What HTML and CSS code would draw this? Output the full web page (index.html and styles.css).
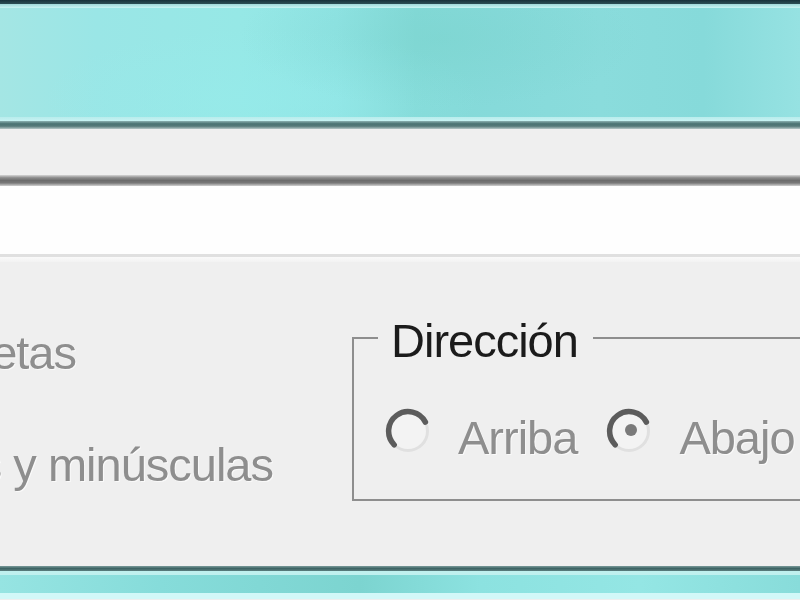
FILE: index.html
```html
<!DOCTYPE html>
<html lang="es">
<head>
<meta charset="utf-8">
<title>Buscar</title>
<link rel="stylesheet" href="styles.css">
</head>
<body>
<div class="window">
  <div class="titlebar">
    <div class="tb-dark"></div>
    <div class="tb-hi"></div>
    <div class="tb-teal"></div>
    <div class="tb-lo"></div>
    <div class="tb-edge"></div>
  </div>
  <div class="band"></div>
  <div class="field">
    <div class="field-edge"></div>
    <div class="field-white"></div>
    <div class="field-line"></div>
    <div class="field-gap"></div>
  </div>
  <div class="body">
    <div class="options">
      <div class="opt opt-words"><span>Solo palabras completas</span></div>
      <div class="opt opt-case"><span>Coincidir mayúsculas y minúsculas</span></div>
    </div>
    <fieldset class="group">
      <legend class="group-title">Dirección</legend>
      <div class="radios">
        <div class="radio">
          <svg class="radio-icon" width="46" height="46" viewBox="0 0 46 46">
            <circle cx="23" cy="23" r="19.5" fill="#f3f3f3" stroke="#e0e0e0" stroke-width="3"/>
            <path d="M9.2 36.8 A19.5 19.5 0 1 1 40.4 14.1" fill="none" stroke="#5c5c5c" stroke-width="5.5" stroke-linecap="round"/>
          </svg>
          <span class="radio-label">Arriba</span>
        </div>
        <div class="radio">
          <svg class="radio-icon" width="46" height="46" viewBox="0 0 46 46">
            <circle cx="23" cy="23" r="19.5" fill="#f3f3f3" stroke="#e0e0e0" stroke-width="3"/>
            <path d="M9.2 36.8 A19.5 19.5 0 1 1 40.4 14.1" fill="none" stroke="#5c5c5c" stroke-width="5.5" stroke-linecap="round"/>
            <circle cx="25" cy="22" r="6" fill="#7a7a7a"/>
          </svg>
          <span class="radio-label">Abajo</span>
        </div>
      </div>
    </fieldset>
  </div>
  <div class="footer">
    <div class="ft-dark"></div>
    <div class="ft-hi"></div>
    <div class="ft-teal"></div>
    <div class="ft-lo"></div>
  </div>
</div>
</body>
</html>
```

FILE: styles.css
```css
html, body {
  margin: 0;
  padding: 0;
  width: 800px;
  height: 600px;
  overflow: hidden;
  background: #efefef;
  font-family: "Liberation Sans", Arial, sans-serif;
}

.window {
  width: 800px;
  height: 600px;
  display: flex;
  flex-direction: column;
  overflow: hidden;
}

/* title bar */
.titlebar {
  display: flex;
  flex-direction: column;
  flex-shrink: 0;
}
.tb-dark {
  height: 4px;
  background: linear-gradient(#17323a, #2c5056);
}
.tb-hi {
  height: 4px;
  background: linear-gradient(#9fd8d8, #c8f6f4);
}
.tb-teal {
  height: 109px;
  background:
    radial-gradient(ellipse 200px 70px at 440px 30px, rgba(118, 208, 200, 0.35), rgba(118, 208, 200, 0) 100%),
    radial-gradient(ellipse 220px 70px at 260px 90px, rgba(150, 236, 236, 0.5), rgba(150, 236, 236, 0) 100%),
    linear-gradient(90deg, #a4e6e4 0%, #9ae6e6 12%, #96e8e6 30%, #90e4e4 42%, #84dad8 52%, #86dada 62%, #8adcdc 75%, #86dada 88%, #96e2e2 100%);
}
.tb-lo {
  height: 4px;
  background: linear-gradient(#b8ecec, #c6f2f2);
}
.tb-edge {
  height: 8px;
  background: linear-gradient(#8ab0b0, #4a7272 35%, #567a7a 65%, #b8c8c8);
}

/* grey band */
.band {
  height: 46px;
  flex-shrink: 0;
  background: #efefef;
}

/* text field */
.field {
  flex-shrink: 0;
  display: flex;
  flex-direction: column;
}
.field-edge {
  height: 11px;
  background: linear-gradient(#d6d6d6, #8c8c8c 25%, #6c6c6c 50%, #787878 72%, #d0d0d0);
}
.field-white {
  height: 68px;
  background: #fefefe;
}
.field-line {
  height: 3px;
  background: #e0e0e0;
}
.field-gap {
  height: 5px;
  background: linear-gradient(#fafafa, #f2f2f2);
}

/* main body */
.body {
  height: 304px;
  flex-shrink: 0;
  display: flex;
  align-items: flex-start;
  background: #efefef;
  padding-top: 4px;
  box-sizing: border-box;
}

.options {
  width: 352px;
  flex-shrink: 0;
  display: flex;
  flex-direction: column;
  padding-top: 62px;
}
.opt {
  display: flex;
  justify-content: flex-end;
  white-space: nowrap;
  font-size: 47px;
  line-height: 50px;
  letter-spacing: -1px;
  color: #8e8e8e;
  text-shadow: 1px 1px 0 #fafafa;
  filter: blur(0.4px);
}
.opt-words {
  width: 76px;
}
.opt-case {
  width: 273px;
  margin-top: 62px;
}

.group {
  flex: 1;
  margin: 49px -120px 0 0;
  padding: 44px 0 36px 24px;
  border: 2px solid #8e8e8e;
  min-width: 0;
}
.group-title {
  font-size: 47px;
  line-height: 40px;
  letter-spacing: -1px;
  color: #1b1b1b;
  padding: 6px 15px 0 13px;
  filter: blur(0.4px);
}

.radios {
  display: flex;
  gap: 29px;
  margin-left: 7px;
}
.radio {
  display: flex;
  align-items: flex-start;
  gap: 27px;
}
.radio-icon {
  display: block;
  margin-top: 3px;
  filter: blur(0.6px);
}
.radio-label {
  font-size: 47px;
  line-height: 50px;
  letter-spacing: -1px;
  padding-top: 8px;
  color: #8e8e8e;
  text-shadow: 1px 1px 0 #fafafa;
  filter: blur(0.4px);
}

/* footer */
.footer {
  display: flex;
  flex-direction: column;
  flex-shrink: 0;
}
.ft-dark {
  height: 5px;
  background: linear-gradient(#7a9a9a, #3e6464 50%, #5a7e7e);
}
.ft-hi {
  height: 4px;
  background: #bff0ee;
}
.ft-teal {
  height: 18px;
  background: linear-gradient(90deg, #96e4e2 0%, #86dcda 20%, #7cd4d0 45%, #8ce2e0 60%, #94e6e4 80%, #88dcda 100%);
}
.ft-lo {
  height: 6px;
  background: #d2f8f8;
}
```
